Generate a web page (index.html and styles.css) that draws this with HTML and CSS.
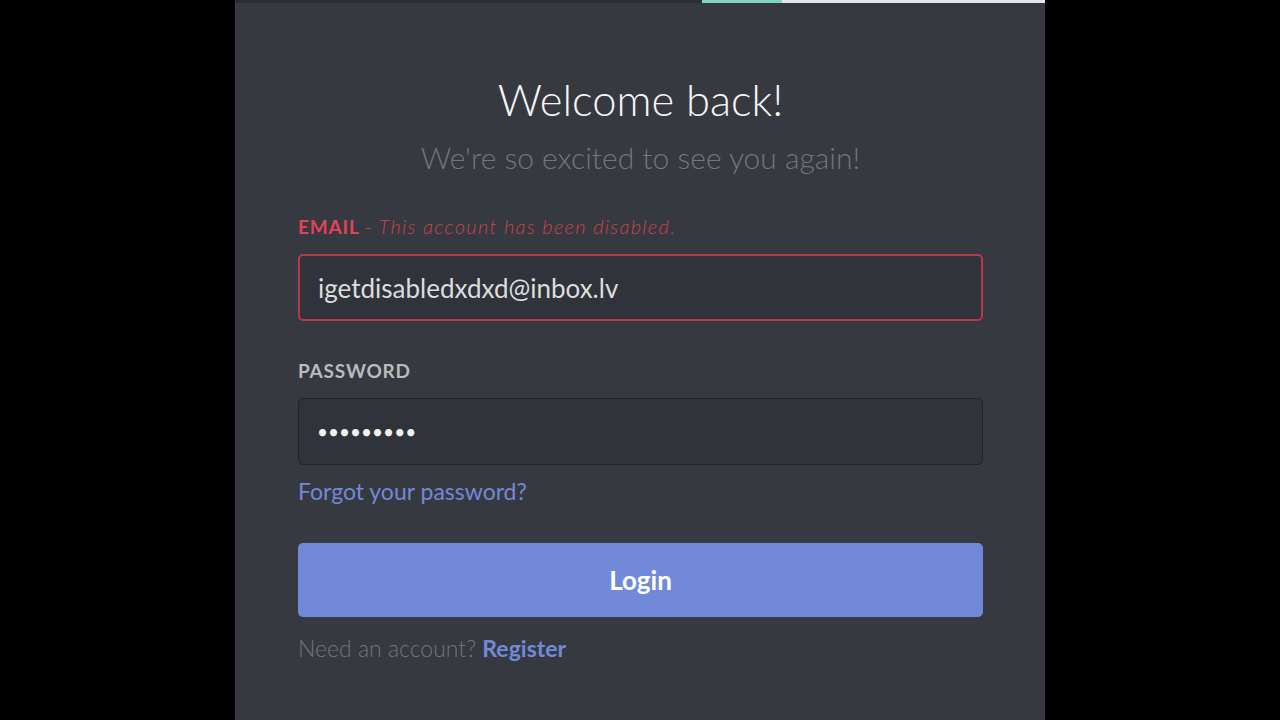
FILE: index.html
```html
<!DOCTYPE html>
<html lang="en">
<head>
    <meta charset="UTF-8">
    <title>Discord - Login</title>
    <meta name="viewport" content="width=device-width, initial-scale=1.0">
    <link rel="stylesheet" href="styles.css">
</head>
<body>

    <div class="panel">
        <div class="topbar">
            <span class="seg-dark"></span>
            <span class="seg-green"></span>
            <span class="seg-light"></span>
        </div>

        <div class="auth">
            <h1>Welcome back!</h1>
            <p class="sub">We're so excited to see you again!</p>

            <form onsubmit="return false;">
                <label for="email" class="label error">EMAIL <span class="error-msg">- This account has been disabled.</span></label>
                <input type="text" id="email" class="field field-error" value="igetdisabledxdxd@inbox.lv">

                <label for="parole" class="label">PASSWORD</label>
                <input type="password" id="parole" class="field field-pass" value="slepenais">

                <a href="#" class="link forgot">Forgot your password?</a>

                <button type="submit" class="btn-login">Login</button>

                <p class="register">Need an account? <a href="#" class="link strong">Register</a></p>
            </form>
        </div>
    </div>

</body>
</html>
```

FILE: styles.css
```css
body {
    margin: 0;
    background-color: #000;
    font-family: Lato, "Open Sans", sans-serif;
    display: flex;
    justify-content: center;
}

.panel {
    width: 810px;
    height: 720px;
    background-color: #36393f;
}

.topbar {
    display: flex;
    height: 3px;
}

.seg-dark {
    width: 467px;
    background-color: #2b2d31;
}

.seg-green {
    width: 80px;
    background-color: #7fd6bd;
}

.seg-light {
    flex: 1;
    background-color: #e3e5ea;
}

.auth {
    padding: 0 62px 0 63px;
}

h1 {
    margin: 70px 0 0;
    text-align: center;
    font-size: 43.5px;
    font-weight: 300;
    line-height: 52px;
    color: #f6f6f7;
}

.sub {
    margin: 14px 0 0;
    text-align: center;
    font-size: 30px;
    font-weight: 300;
    color: #72767d;
}

form {
    display: flex;
    flex-direction: column;
    margin-top: 40px;
}

.label {
    font-size: 19px;
    line-height: 23px;
    font-weight: bold;
    letter-spacing: 0.8px;
    color: #b9bbbe;
    margin-bottom: 16px;
}

.label.error {
    color: #e0435a;
}

.error-msg {
    font-size: 20px;
    font-weight: 300;
    font-style: italic;
    letter-spacing: 1.3px;
    color: #c8434f;
}

.field {
    box-sizing: border-box;
    height: 67px;
    padding: 0 18px;
    font-family: Lato, sans-serif;
    font-size: 26px;
    color: #dcddde;
    background-color: #303339;
    border: 1px solid #222327;
    border-radius: 5px;
    margin-bottom: 38px;
}

.field-error {
    border: 2px solid #b8394a;
}

.field-pass {
    font-size: 19px;
    color: #f0f0f0;
    margin-bottom: 0;
}

.link {
    color: #7289da;
    text-decoration: none;
}

.forgot {
    margin-top: 12px;
    font-size: 23px;
    align-self: flex-start;
}

.btn-login {
    margin-top: 38px;
    height: 74px;
    border: none;
    border-radius: 5px;
    background-color: #7289da;
    color: #fff;
    font-family: Lato, sans-serif;
    font-size: 26px;
    font-weight: bold;
    cursor: pointer;
}

.register {
    margin: 17px 0 0;
    font-size: 23px;
    font-weight: 300;
    color: #72767d;
}

.strong {
    font-weight: bold;
}
```
